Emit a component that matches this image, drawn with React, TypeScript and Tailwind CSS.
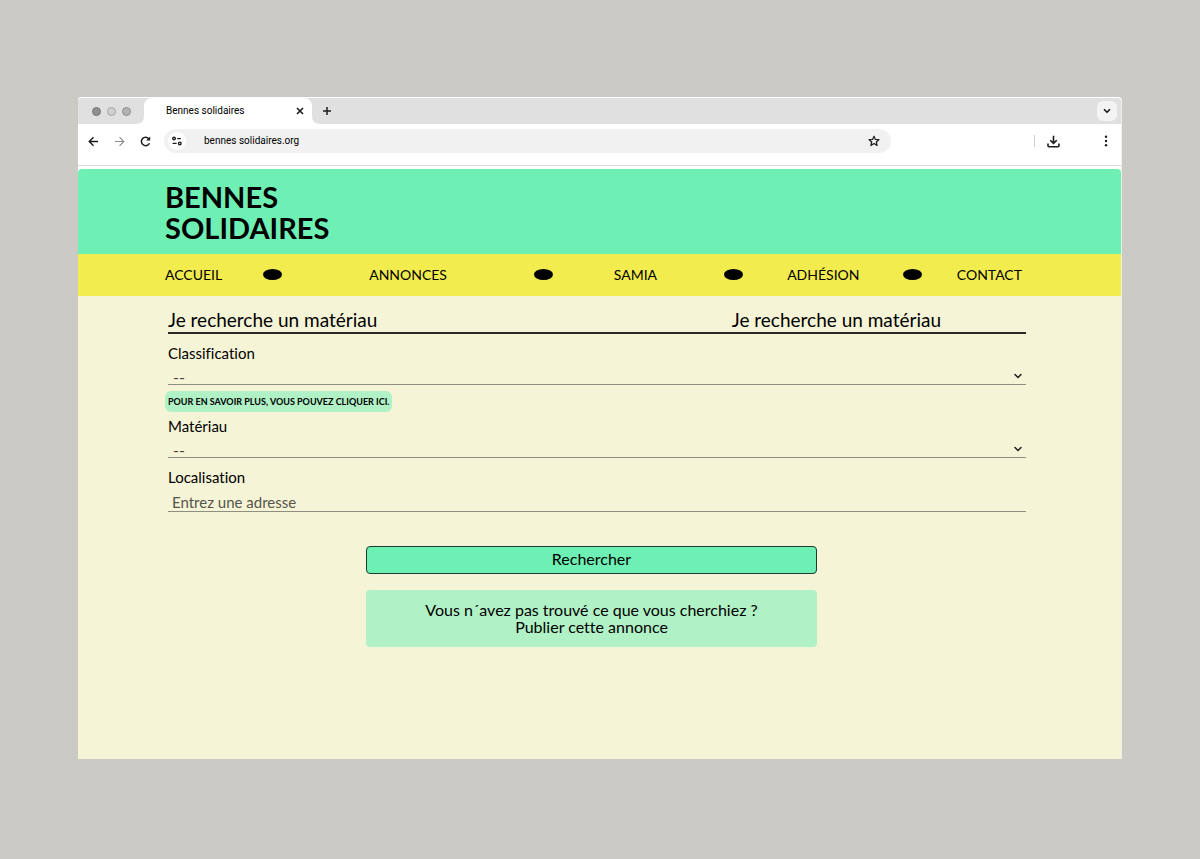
import React, { useState } from 'react';
import { ChevronDown } from 'lucide-react';

// --- ICONS ---

const BackIcon = () => (
    <svg width="11" height="11" viewBox="0 0 11 11" fill="none" stroke="#1c1c1c" strokeWidth="1.4">
        <path d="M10 5.5H1.5M5.5 1.2L1.2 5.5l4.3 4.3" />
    </svg>
);

const ForwardIcon = () => (
    <svg width="11" height="11" viewBox="0 0 11 11" fill="none" stroke="#8c8c8c" strokeWidth="1.1">
        <path d="M1 5.5h8.5M5.5 1.2l4.3 4.3-4.3 4.3" />
    </svg>
);

const ReloadIcon = () => (
    <svg width="11" height="11" viewBox="0 0 11 11" fill="none" stroke="#1c1c1c" strokeWidth="1.5">
        <path d="M9.4 7.2A4.2 4.2 0 1 1 8.8 2.7" />
        <path d="M10.2 0.4v4.1H6.1z" fill="#1c1c1c" stroke="none" />
    </svg>
);

const TuneIcon = () => (
    <svg width="12" height="10" viewBox="0 0 12 10" fill="none" stroke="#1c1c1c" strokeWidth="1.4">
        <circle cx="3" cy="2.6" r="1.3" />
        <path d="M6.2 2.6h3.6M1.6 7.4h4" />
        <circle cx="8.8" cy="7.4" r="1.3" />
    </svg>
);

const StarIcon = () => (
    <svg width="12" height="12" viewBox="0 0 12 12" fill="none" stroke="#1c1c1c" strokeWidth="1.2" strokeLinejoin="round">
        <path d="M6 1.2l1.4 3.2 3.5.3-2.6 2.3.8 3.5L6 8.6l-3.1 1.9.8-3.5L1.1 4.7l3.5-.3z" />
    </svg>
);

const DownloadIcon = () => (
    <svg width="13" height="13" viewBox="0 0 13 13" fill="none" stroke="#1c1c1c" strokeWidth="1.6">
        <path d="M6.5 0.8v7.4M3.2 5.2l3.3 3.2 3.3-3.2" />
        <path d="M1 8.6v2.2q0 1 1 1h9q1 0 1-1V8.6" />
    </svg>
);

const MenuIcon = () => (
    <svg width="4" height="12" viewBox="0 0 4 12" fill="#1c1c1c">
        <circle cx="2" cy="1.7" r="1.2" />
        <circle cx="2" cy="6" r="1.2" />
        <circle cx="2" cy="10.3" r="1.2" />
    </svg>
);

const CloseIcon = () => (
    <svg width="8" height="8" viewBox="0 0 8 8" stroke="#1c1c1c" strokeWidth="1.6">
        <path d="M1 1l6 6M7 1L1 7" />
    </svg>
);

const PlusIcon = () => (
    <svg width="8" height="8" viewBox="0 0 8 8" stroke="#1c1c1c" strokeWidth="1.5">
        <path d="M4 0v8M0 4h8" />
    </svg>
);

// Curved foot of the active tab
const TabFoot = ({ flip = false }: { flip?: boolean }) => (
    <svg width="8" height="8" viewBox="0 0 8 8" fill="#fff" className={flip ? 'self-end -scale-x-100' : 'self-end'}>
        <path d="M8 0v8H0q8 0 8-8z" />
    </svg>
);

// --- BROWSER CHROME ---

const TabStrip = () => (
    <div className="flex h-[27px] items-center bg-[#e0e0e0] border-t border-white rounded-t">
        <div className="flex gap-[6px] pl-[14px] pr-[5px]">
            <span className="h-[9px] w-[9px] rounded-full border border-[#777] bg-[#8f8f8f]" />
            <span className="h-[9px] w-[9px] rounded-full border border-[#a5a5a5] bg-[#cfcfcf]" />
            <span className="h-[9px] w-[9px] rounded-full border border-[#8c8c8c] bg-[#b3b3b3]" />
        </div>
        <TabFoot />
        <div className="flex h-full w-[168px] items-center justify-between rounded-t-lg bg-white pl-[22px] pr-2">
            <span className="text-[10px] leading-3 text-black">Bennes solidaires</span>
            <button type="button" aria-label="Fermer l'onglet"><CloseIcon /></button>
        </div>
        <TabFoot flip />
        <button type="button" aria-label="Nouvel onglet" className="pl-[3px]"><PlusIcon /></button>
        <button type="button" aria-label="Rechercher dans les onglets" className="ml-auto mr-1 flex h-5 w-5 items-center justify-center rounded-md bg-[#f3f3f3]">
            <ChevronDown size={10} strokeWidth={4} color="#1c1c1c" />
        </button>
    </div>
);

const Toolbar = () => (
    <div className="flex h-[42px] items-center border-b border-[#dcdcdc] bg-white pb-[7px] pl-[10px] pr-[13px]">
        <div className="flex items-center gap-[15px]">
            <button type="button" aria-label="Précédent"><BackIcon /></button>
            <button type="button" aria-label="Suivant"><ForwardIcon /></button>
            <button type="button" aria-label="Actualiser"><ReloadIcon /></button>
        </div>
        <div className="ml-[13px] mr-[143px] flex h-6 flex-1 items-center rounded-full bg-[#f1f1f1] pl-1 pr-[11px]">
            <span className="flex h-[18px] w-[18px] items-center justify-center rounded-full bg-white"><TuneIcon /></span>
            <input aria-label="Adresse" defaultValue="bennes solidaires.org" className="ml-[18px] min-w-0 flex-1 bg-transparent text-[10px] leading-3 text-black outline-none" />
            <button type="button" aria-label="Ajouter aux favoris"><StarIcon /></button>
        </div>
        <span className="h-3 w-px bg-[#cfcfcf]" />
        <button type="button" aria-label="Téléchargements" className="ml-3"><DownloadIcon /></button>
        <button type="button" aria-label="Menu" className="ml-11"><MenuIcon /></button>
    </div>
);

// --- SITE ---

// Black oval between two links, with elastic space on either side
const Dot = ({ before, after }: { before: string; after: string }) => (
    <>
        <span className={`basis-0 ${before}`} />
        <span className="h-[11px] w-[19px] shrink-0 rounded-[50%] bg-black" />
        <span className={`basis-0 ${after}`} />
    </>
);

const NavBar = () => (
    <nav className="flex h-[42px] items-center bg-[#f3ec4f] pb-px pl-[87px] pr-[99px] text-[14px] text-black">
        <a href="#accueil">ACCUEIL</a>
        <Dot before="grow-[41]" after="grow-[88]" />
        <a href="#annonces">ANNONCES</a>
        <Dot before="grow-[88]" after="grow-[61]" />
        <a href="#samia">SAMIA</a>
        <Dot before="grow-[67]" after="grow-[45]" />
        <a href="#adhesion">ADHÉSION</a>
        <Dot before="grow-[44]" after="grow-[35]" />
        <a href="#contact">CONTACT</a>
    </nav>
);

const SelectField = ({ id, label }: { id: string; label: string }) => (
    <>
        <label htmlFor={id} className="block text-[15px] leading-5 text-black">{label}</label>
        <div className="relative border-b border-[#8f8e80]">
            <select id={id} className="block h-[21px] w-full appearance-none bg-transparent pl-[5px] pt-[6px] text-[16px] leading-4 text-[#44443c] outline-none">
                <option>--</option>
            </select>
            <ChevronDown size={12} strokeWidth={3} color="#1c1c1c" className="pointer-events-none absolute right-[2px] top-[7px]" />
        </div>
    </>
);

const SearchForm = () => {
    const [address, setAddress] = useState('');

    return (
        <form onSubmit={(e) => e.preventDefault()}>
            <div className="mt-[9px]">
                <SelectField id="classification" label="Classification" />
            </div>
            <a href="#plus" className="-ml-[3px] mt-[6px] flex h-[21px] w-fit items-center rounded-md bg-[#b1f1c6] px-[3px] text-[9px] font-bold text-black">
                POUR EN SAVOIR PLUS, VOUS POUVEZ CLIQUER ICI.
            </a>
            <div className="mt-1">
                <SelectField id="materiau" label="Matériau" />
            </div>
            <div className="mt-[9px]">
                <label htmlFor="localisation" className="block text-[15px] leading-5 text-black">Localisation</label>
                <input
                    id="localisation"
                    value={address}
                    onChange={(e) => setAddress(e.target.value)}
                    placeholder="Entrez une adresse"
                    className="block h-[25px] w-full border-b border-[#8f8e80] bg-transparent pl-1 pt-[5px] text-[15px] text-black outline-none placeholder:text-[#55554c]"
                />
            </div>
            <div className="mt-[34px] flex flex-col items-center gap-4 pr-[11px]">
                <button type="submit" className="h-7 w-full max-w-[451px] rounded border border-[#1d3d2c] bg-[#6eefb4] pb-[2px] text-[16px] leading-4 text-black">
                    Rechercher
                </button>
                <a href="#publier" className="w-full max-w-[451px] rounded bg-[#b1f1c6] px-4 pb-3 pt-[11px] text-center text-[16px] leading-[17px] text-black">
                    Vous n´avez pas trouvé ce que vous cherchiez ?<br />
                    Publier cette annonce
                </a>
            </div>
        </form>
    );
};

export default function App() {
    return (
        <div className="flex min-h-screen flex-col bg-[#cbcac4] px-[78px] pb-[100px] pt-[97px] font-[Roboto,sans-serif]">
            <div className="flex flex-1 flex-col rounded-t border-r border-[#eeeee8] bg-white">
                <TabStrip />
                <Toolbar />
                <div className="flex flex-1 flex-col pt-[3px] font-[Lato,sans-serif] [font-variant-ligatures:none]">
                    <header className="flex h-[85px] items-center rounded-t-sm bg-[#6eefb4] pl-[87px] pt-px">
                        <h1 className="text-[29px] font-bold leading-[31px] text-black">
                            BENNES<br />SOLIDAIRES
                        </h1>
                    </header>
                    <NavBar />
                    <main className="flex-1 bg-[#f6f4d7] pl-[90px] pr-[95px] pt-3">
                        <div className="flex justify-between border-b-2 border-[#2a2a26] pr-[85px] text-[19px] leading-6 text-black">
                            <h2>Je recherche un matériau</h2>
                            <h2>Je recherche un matériau</h2>
                        </div>
                        <SearchForm />
                    </main>
                </div>
            </div>
        </div>
    );
}
